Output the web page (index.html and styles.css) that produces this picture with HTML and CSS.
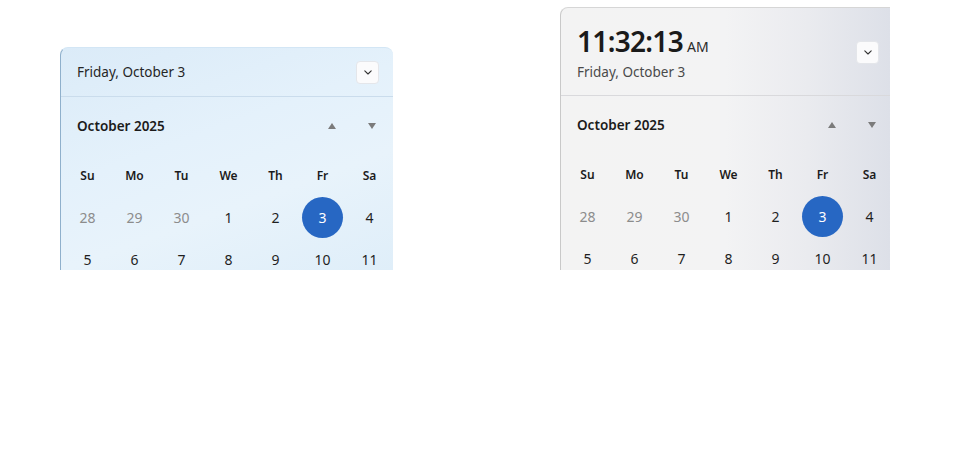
FILE: index.html
```html
<!DOCTYPE html>
<html lang="en">
<head>
<meta charset="utf-8">
<title>Calendar flyouts</title>
<link rel="stylesheet" href="styles.css">
</head>
<body>
<div class="desk">
  <section class="flyout flyout--blue">
    <div class="inner">
      <header class="head head--compact">
        <span class="date">Friday, October 3</span>
        <button class="chev" aria-label="Expand"><svg width="8" height="5" viewBox="0 0 8 5"><path d="M0.8 0.8 L4 4 L7.2 0.8" fill="none" stroke="#333" stroke-width="1.1" stroke-linecap="round" stroke-linejoin="round"/></svg></button>
      </header>
      <div class="cal">
        <div class="cal-top">
          <span class="month">October 2025</span>
          <div class="arrows"><span class="tri tri--up"></span><span class="tri tri--down"></span></div>
        </div>
        <div class="grid">
          <span class="dow">Su</span><span class="dow">Mo</span><span class="dow">Tu</span><span class="dow">We</span><span class="dow">Th</span><span class="dow">Fr</span><span class="dow">Sa</span>
          <span class="day day--out">28</span><span class="day day--out">29</span><span class="day day--out">30</span><span class="day">1</span><span class="day">2</span><span class="day day--sel"><i>3</i></span><span class="day">4</span>
          <span class="day">5</span><span class="day">6</span><span class="day">7</span><span class="day">8</span><span class="day">9</span><span class="day">10</span><span class="day">11</span>
        </div>
      </div>
    </div>
  </section>

  <section class="flyout flyout--grey">
    <div class="inner">
      <header class="head head--clock">
        <div class="clock">
          <div class="time">11:32:13<span class="ampm">AM</span></div>
          <div class="date">Friday, October 3</div>
        </div>
        <button class="chev" aria-label="Expand"><svg width="8" height="5" viewBox="0 0 8 5"><path d="M0.8 0.8 L4 4 L7.2 0.8" fill="none" stroke="#333" stroke-width="1.1" stroke-linecap="round" stroke-linejoin="round"/></svg></button>
      </header>
      <div class="cal">
        <div class="cal-top">
          <span class="month">October 2025</span>
          <div class="arrows"><span class="tri tri--up"></span><span class="tri tri--down"></span></div>
        </div>
        <div class="grid">
          <span class="dow">Su</span><span class="dow">Mo</span><span class="dow">Tu</span><span class="dow">We</span><span class="dow">Th</span><span class="dow">Fr</span><span class="dow">Sa</span>
          <span class="day day--out">28</span><span class="day day--out">29</span><span class="day day--out">30</span><span class="day">1</span><span class="day">2</span><span class="day day--sel"><i>3</i></span><span class="day">4</span>
          <span class="day">5</span><span class="day">6</span><span class="day">7</span><span class="day">8</span><span class="day">9</span><span class="day">10</span><span class="day">11</span>
        </div>
      </div>
    </div>
  </section>
</div>
</body>
</html>
```

FILE: styles.css
```css
* { box-sizing: border-box; }
html, body { margin: 0; padding: 0; background: #fff; }
body {
  width: 963px;
  height: 453px;
  overflow: hidden;
  font-family: "Noto Sans", "Open Sans", sans-serif;
  color: #1b1b1b;
}
.desk {
  display: flex;
  align-items: flex-start;
  padding: 7px 0 0 60px;
  gap: 167px;
}
.flyout {
  overflow: hidden;
  border-radius: 8px 8px 0 0;
}
.flyout--blue {
  width: 333px;
  height: 223px;
  margin-top: 40px;
  background: linear-gradient(160deg, #dbebf8 0%, #e4f1fb 40%, #e8f3fb 65%, #dfeef9 100%);
  border-left: 1px solid #8fb0cc;
  border-top: 1px solid #d3e6f5;
}
.flyout--grey {
  width: 330px;
  height: 263px;
  border-radius: 8px 0 0 0;
  background: linear-gradient(90deg, #f3f3f3 0%, #f3f3f4 50%, #eaebef 75%, #dde0e8 100%);
  border-left: 1px solid #c9c9c9;
  border-top: 1px solid #d6d6d6;
}
.inner { width: 333px; }

.head {
  display: flex;
  justify-content: space-between;
  align-items: center;
  padding: 0 15px 0 16px;
}
.head--compact {
  height: 49px;
  border-bottom: 1px solid #cadcec;
}
.head--clock {
  height: 88px;
  border-bottom: 1px solid #d9d9dc;
  align-items: flex-start;
  padding-top: 15px;
}
.head--clock .chev { margin-top: 18px; }
.date {
  font-size: 13.5px;
  line-height: 20px;
  color: #262626;
}
.head--clock .date { color: #4a4a4a; margin-top: -3px; }
.time {
  font-size: 28px;
  line-height: 36px;
  font-weight: 600;
  letter-spacing: -0.7px;
  color: #1a1a1a;
}
.ampm {
  font-size: 14px;
  font-weight: 400;
  letter-spacing: 0;
  margin-left: 4px;
  color: #2b2b2b;
}
.chev {
  width: 23px;
  height: 23px;
  padding: 0;
  border: 1px solid #e4e6ea;
  border-radius: 4px;
  background: #fbfbfc;
  display: flex;
  align-items: center;
  justify-content: center;
}

.cal { padding: 19px 0 0 3px; }
.cal-top {
  display: flex;
  justify-content: space-between;
  align-items: center;
  height: 20px;
  padding: 0 18px 0 13px;
}
.month {
  font-size: 13.5px;
  font-weight: 600;
  color: #1b1b1b;
}
.arrows { display: flex; gap: 32px; }
.tri {
  width: 0; height: 0;
  border-left: 4.5px solid transparent;
  border-right: 4.5px solid transparent;
}
.tri--up { border-bottom: 6px solid #7b7b7b; }
.tri--down { border-top: 6px solid #7b7b7b; }

.grid {
  margin-top: 18px;
  display: grid;
  grid-template-columns: repeat(7, 47px);
  grid-auto-rows: 42px;
}
.dow, .day {
  display: flex;
  align-items: center;
  justify-content: center;
}
.dow {
  font-size: 12px;
  font-weight: 600;
  color: #1b1b1b;
}
.day {
  font-size: 14px;
  color: #1f1f1f;
}
.day--out { color: #8c8c8c; }
.day--sel i {
  font-style: normal;
  width: 41px;
  height: 41px;
  border-radius: 50%;
  background: #2767c3;
  color: #fff;
  display: flex;
  align-items: center;
  justify-content: center;
}
```
